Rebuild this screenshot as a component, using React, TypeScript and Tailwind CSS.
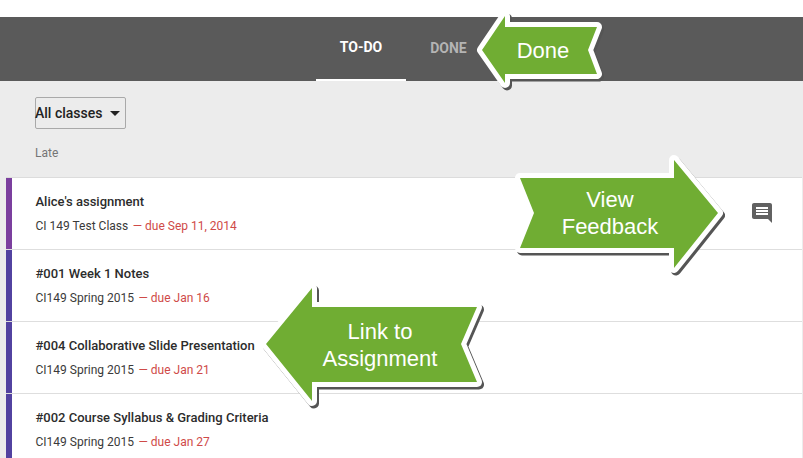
const rows = [
  { title: "Alice's assignment", cls: "CI 149 Test Class", due: "— due Sep 11, 2014", late: true, feedback: true },
  { title: "#001 Week 1 Notes", cls: "CI149 Spring 2015", due: "— due Jan 16" },
  { title: "#004 Collaborative Slide Presentation", cls: "CI149 Spring 2015", due: "— due Jan 21" },
  { title: "#002 Course Syllabus & Grading Criteria", cls: "CI149 Spring 2015", due: "— due Jan 27" },
];

function Arrow({ points, left, top, width, height, lines, textClass }: { points: string; left: number; top: number; width: number; height: number; lines: string[]; textClass: string }) {
  return (
    <div className="absolute" style={{ left, top, width, height }}>
      <svg width={width} height={height} className="absolute inset-0 overflow-visible">
        <polygon points={points} fill="#555" stroke="#555" strokeWidth="10" strokeLinejoin="round" transform="translate(2 2.5)" className="blur-[0.6px]" />
        <polygon points={points} fill="#70ad33" stroke="#fff" strokeWidth="10" strokeLinejoin="round" />
        <polygon points={points} fill="#70ad33" />
      </svg>
      <div className={`absolute text-center text-white text-[22px] leading-[27px] font-['Liberation_Sans',sans-serif] ${textClass}`}>
        {lines.map((l) => (
          <div key={l}>{l}</div>
        ))}
      </div>
    </div>
  );
}

export default function App() {
  return (
    <div className="relative w-[803px] h-[458px] overflow-hidden bg-white font-['Roboto',sans-serif]">
      <div className="h-[17px] bg-white" />
      <div className="h-[64px] bg-[#5a5a5a] flex pl-[316px]">
        <div className="w-[90px] border-b-2 border-white flex items-center justify-center pb-[2px] text-[14px] font-bold text-white">TO-DO</div>
        <div className="w-[85px] flex items-center justify-center pb-[2px] text-[14px] font-bold text-[#b4b4b4]">DONE</div>
      </div>
      <div className="bg-[#ececec] pl-[6px] pr-px h-[377px]">
        <div className="pl-[29px] h-[96px]">
          <div className="pt-4">
            <div className="w-[91px] h-[32px] border border-[#a9a9a9] rounded-[2px] flex items-center text-[14px] font-medium text-[#222]">
              <span className="-ml-px">All classes</span>
              <span className="ml-[8px] w-0 h-0 border-x-[5px] border-x-transparent border-t-[5px] border-t-[#222]" />
            </div>
          </div>
          <div className="mt-[17px] text-[12px] leading-[14px] text-[#757575]">Late</div>
        </div>
        <div className="border-t border-[#dcdcdc]">
          {rows.map((r) => (
            <div key={r.title} className="h-[72px] bg-white border-b border-[#dedede] flex items-center">
              <div className={`w-[6px] h-full ${r.late ? "bg-[#7b3f9e]" : "bg-[#5242a0]"}`} />
              <div className="ml-[23.5px] flex-1 pt-[1px]">
                <div className="text-[13px] leading-[16px] font-medium text-[#2c2c2c]">{r.title}</div>
                <div className="mt-[8px] text-[12px] leading-[16px] text-[#3a3a3a]">
                  {r.cls} <span className="ml-[1.5px] text-[#cf4a48]">{r.due}</span>
                </div>
              </div>
              {r.feedback && (
                <svg width="24" height="24" viewBox="0 0 24 24" className="mr-[28px] mb-[1px]" fill="#616161">
                  <path d="M21.99 4c0-1.1-.89-2-1.99-2H4c-1.1 0-2 .9-2 2v12c0 1.1.9 2 2 2h14l4 4-.01-18zM18 14H6v-2h12v2zm0-3H6V9h12v2zm0-3H6V6h12v2z" />
                </svg>
              )}
            </div>
          ))}
        </div>
      </div>
      <Arrow
        left={478}
        top={10}
        width={125}
        height={80}
        points="4,40 27,6 27,17 119,17 110,40 119,64 27,64 27,73"
        lines={["Done"]}
        textClass="left-[28px] top-[27px] w-[74px]"
      />
      <Arrow
        left={516}
        top={156}
        width={210}
        height={116}
        points="4,22 158,22 158,4 202,57 158,112 158,92 4,92 18,57"
        lines={["View", "Feedback"]}
        textClass="left-[24px] top-[30px] w-[140px]"
      />
      <Arrow
        left={262}
        top={284}
        width={220}
        height={122}
        points="4,60 50,4 50,23 215,23 199,60 215,98 50,98 50,117"
        lines={["Link to", "Assignment"]}
        textClass="left-[48px] top-[34px] w-[140px]"
      />
    </div>
  );
}
